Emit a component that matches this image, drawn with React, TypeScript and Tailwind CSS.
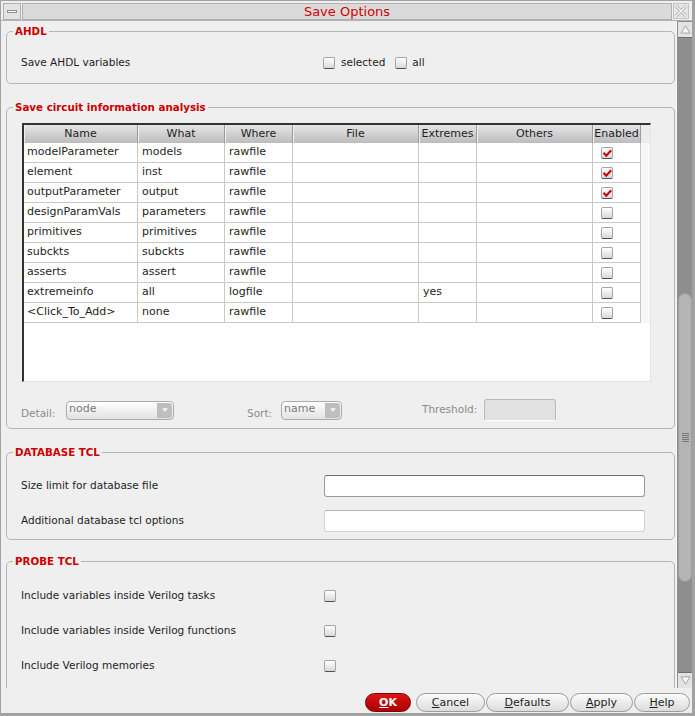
import React from 'react';

interface SaveRow {
  name: string;
  what: string;
  where: string;
  file: string;
  extremes: string;
  others: string;
  enabled: boolean;
}

const rows: SaveRow[] = [
  { name: 'modelParameter', what: 'models', where: 'rawfile', file: '', extremes: '', others: '', enabled: true },
  { name: 'element', what: 'inst', where: 'rawfile', file: '', extremes: '', others: '', enabled: true },
  { name: 'outputParameter', what: 'output', where: 'rawfile', file: '', extremes: '', others: '', enabled: true },
  { name: 'designParamVals', what: 'parameters', where: 'rawfile', file: '', extremes: '', others: '', enabled: false },
  { name: 'primitives', what: 'primitives', where: 'rawfile', file: '', extremes: '', others: '', enabled: false },
  { name: 'subckts', what: 'subckts', where: 'rawfile', file: '', extremes: '', others: '', enabled: false },
  { name: 'asserts', what: 'assert', where: 'rawfile', file: '', extremes: '', others: '', enabled: false },
  { name: 'extremeinfo', what: 'all', where: 'logfile', file: '', extremes: 'yes', others: '', enabled: false },
  { name: '<Click_To_Add>', what: 'none', where: 'rawfile', file: '', extremes: '', others: '', enabled: false },
];

const headers = ['Name', 'What', 'Where', 'File', 'Extremes', 'Others', 'Enabled'];

const CheckBox = ({ checked = false }: { checked?: boolean }) => (
  <span className="flex h-[12px] w-[12px] shrink-0 items-center justify-center rounded-[2px] border border-[#a5a5a5] border-b-[#505050] bg-gradient-to-b from-white to-[#d8d8d8]">
    {checked && (
      <svg viewBox="0 0 10 10" className="h-[10px] w-[10px]">
        <path d="M1.6 4.8 L4.2 7.6 L9.2 2.2" fill="none" stroke="#d00000" strokeWidth="2.1" />
      </svg>
    )}
  </span>
);

const Group = ({ title, className = '', children }: { title: string; className?: string; children: React.ReactNode }) => (
  <fieldset className={`ml-[5px] mr-[1px] rounded-[5px] border border-[#b6b6b6] ${className}`}>
    <legend className="ml-[6px] px-[2px] text-[10.3px] font-bold leading-[14px] text-[#cc0000]">{title}</legend>
    {children}
  </fieldset>
);

const Combo = ({ value, width }: { value: string; width: string }) => (
  <div className={`flex h-[19px] ${width} items-start rounded-[4px] border border-[#ababab] bg-gradient-to-b from-white to-[#e2e2e2]`}>
    <span className="flex-1 pl-[2px] text-[11px] leading-[14px] text-[#7a7a7a]">{value}</span>
    <span className="mr-[1px] mt-[1px] flex h-[15px] w-[15px] items-center justify-center rounded-r-[3px] bg-[#bebebe]">
      <svg viewBox="0 0 8 5" className="h-[4px] w-[6px]">
        <polygon points="0,0 8,0 4,5" fill="#f4f4f4" />
      </svg>
    </span>
  </div>
);

const ScrollArrow = ({ up }: { up?: boolean }) => (
  <div className={`flex h-[16px] w-[14px] items-center justify-center bg-[#e3e3e3] ${up ? 'border-b border-[#6f6f6f]' : 'border-t border-[#6f6f6f]'}`}>
    <svg viewBox="0 0 12 10" className="h-[9px] w-[11px]">
      <polygon points={up ? '1,9 6,1 11,9' : '1,1 6,9 11,1'} fill="#f6f6f6" stroke="#9d9d9d" strokeWidth="1" />
    </svg>
  </div>
);

const Button = ({ children, width, ok = false, className = '' }: { children: React.ReactNode; width: string; ok?: boolean; className?: string }) => (
  <button
    className={`flex h-[19px] ${width} items-center justify-center rounded-full border text-[11px] leading-[13px] ${
      ok
        ? 'border-[#7a0000] bg-gradient-to-b from-[#e01515] to-[#a80000] font-bold text-white'
        : 'border-[#9b9b9b] bg-gradient-to-b from-[#fcfcfc] to-[#dcdcdc] text-[#1e1e1e]'
    } ${className}`}
  >
    {children}
  </button>
);

export default function App() {
  return (
    <div className="flex h-[716px] w-[695px] flex-col border-b-[3px] border-l border-r-[3px] border-t border-[#a2a2a2] bg-[#efefef] font-['DejaVu_Sans',sans-serif] text-[#1e1e1e]">
      {/* Title bar */}
      <div className="flex h-[20px] shrink-0 items-start border-b border-[#b2b2b2] pt-[2px]">
        <div className="ml-[2px] flex h-[17px] w-[18px] items-center justify-center border border-[#b0b0b0] bg-[#e3e3e3]">
          <span className="h-[3px] w-[10px] border border-[#8f8f8f] bg-white" />
        </div>
        <div className="ml-[1px] flex h-[17px] flex-1 items-center justify-center border border-[#b0b0b0] bg-[#dadada]">
          <span className="text-[13px] leading-[15px] text-[#d40000]">Save Options</span>
        </div>
        <div className="ml-[1px] mr-[3px] flex h-[16px] w-[16px] items-center justify-center border border-[#c4c4c4] bg-[#e6e6e6]">
          <svg viewBox="0 0 14 14" className="h-[14px] w-[14px]">
            <path d="M2 2 L12 12 M12 2 L2 12" stroke="#a8a8a8" strokeWidth="3" />
            <path d="M2 2 L12 12 M12 2 L2 12" stroke="#fafafa" strokeWidth="1.4" />
          </svg>
        </div>
      </div>

      {/* Body */}
      <div className="flex min-h-0 flex-1">
        <div className="min-w-0 flex-1 overflow-hidden">
          {/* AHDL */}
          <Group title="AHDL" className="mt-[3px]">
            <div className="mb-[10px] mt-[15px] flex h-[20px] items-center pl-[14px] text-[10.5px]">
              <span className="w-[302px]">Save AHDL variables</span>
              <CheckBox />
              <span className="ml-[6px]">selected</span>
              <span className="ml-[10px]"><CheckBox /></span>
              <span className="ml-[5px]">all</span>
            </div>
          </Group>

          {/* Save circuit information analysis */}
          <Group title="Save circuit information analysis" className="mt-[16px]">
            <div className="ml-[15px] mt-[9px] flex h-[259px] w-[629px] flex-col border-b border-l-2 border-r border-t-2 border-b-[#e4e4e4] border-l-[#333] border-r-[#e4e4e4] border-t-[#333] bg-white">
              <div className="grid h-[18px] shrink-0 grid-cols-[114px_87px_68px_126px_58px_116px_48px_9px] bg-gradient-to-b from-[#e6e6e6] to-[#bcbcbc] text-[11px] leading-[18px]">
                {headers.map((h) => (
                  <div key={h} className="border-r border-[#9c9c9c] text-center shadow-[inset_1px_0_0_#eeeeee]">
                    {h}
                  </div>
                ))}
                <div className="bg-[#ececec]" />
              </div>
              {rows.map((r) => (
                <div key={r.name} className="grid h-[20px] grid-cols-[114px_87px_68px_126px_58px_116px_48px_9px] text-[11px] leading-[18px]">
                  <div className="border-b border-r border-[#c9c9c9] pl-[3px]">{r.name}</div>
                  <div className="border-b border-r border-[#c9c9c9] pl-[4px]">{r.what}</div>
                  <div className="border-b border-r border-[#c9c9c9] pl-[4px]">{r.where}</div>
                  <div className="border-b border-r border-[#c9c9c9] pl-[4px]">{r.file}</div>
                  <div className="border-b border-r border-[#c9c9c9] pl-[4px]">{r.extremes}</div>
                  <div className="border-b border-r border-[#c9c9c9] pl-[4px]">{r.others}</div>
                  <div className="flex items-center border-b border-r border-[#c9c9c9] pl-[8px]">
                    <CheckBox checked={r.enabled} />
                  </div>
                  <div className="bg-[#f7f7f7]" />
                </div>
              ))}
            </div>
            <div className="mb-[7px] ml-[14px] mt-[17px] flex h-[22px] items-center text-[10.5px] text-[#8c8c8c]">
              <span className="mt-[8px] w-[45px]">Detail:</span>
              <Combo value="node" width="w-[108px]" />
              <span className="ml-[73px] mt-[8px] w-[34px]">Sort:</span>
              <Combo value="name" width="w-[61px]" />
              <span className="ml-[80px] w-[62px]">Threshold:</span>
              <div className="h-[22px] w-[72px] rounded-[3px] border border-[#b9b9b9] border-b-white bg-[#e1e1e1]" />
            </div>
          </Group>

          {/* DATABASE TCL */}
          <Group title="DATABASE TCL" className="mt-[16px]">
            <div className="mb-[7px] mt-[16px] flex flex-col gap-[13px] pl-[14px] text-[10.5px]">
              <div className="flex h-[22px] items-center">
                <span className="w-[303px]">Size limit for database file</span>
                <div className="h-[22px] w-[321px] rounded-[3px] border border-[#9a9a9a] border-t-[#6e6e6e] bg-white" />
              </div>
              <div className="flex h-[22px] items-center">
                <span className="w-[303px]">Additional database tcl options</span>
                <div className="h-[22px] w-[321px] rounded-[3px] border border-[#d2d2d2] border-t-[#b4b4b4] bg-white" />
              </div>
            </div>
          </Group>

          {/* PROBE TCL */}
          <Group title="PROBE TCL" className="mt-[14px]">
            <div className="mb-[20px] mt-[18px] flex flex-col gap-[15px] pl-[14px] text-[10.5px]">
              {['Include variables inside Verilog tasks', 'Include variables inside Verilog functions', 'Include Verilog memories'].map((t) => (
                <div key={t} className="flex h-[20px] items-center">
                  <span className="w-[303px]">{t}</span>
                  <CheckBox />
                </div>
              ))}
            </div>
          </Group>
        </div>

        {/* Scrollbar */}
        <div className="flex w-[16px] shrink-0 flex-col border-l border-[#f6f6f6] bg-[#8e8e8e] pl-[1px] pt-[1px]">
          <ScrollArrow up />
          <div className="flex-1">
            <div className="mt-[255px] flex h-[289px] w-[14px] flex-col items-center justify-center gap-[1px] rounded-[7px] border border-[#9c9c9c] bg-[#b4b4b4]">
              {[0, 1, 2, 3, 4].map((i) => (
                <span key={i} className="h-[1px] w-[7px] bg-[#777]" />
              ))}
            </div>
          </div>
          <ScrollArrow />
        </div>
      </div>

      {/* Buttons */}
      <div className="flex h-[25px] shrink-0 items-start justify-end pr-[2px] pt-[5px]">
        <Button width="w-[46px]" ok>
          <span className="underline">O</span>K
        </Button>
        <Button width="w-[69px]" className="ml-[5px]">
          <span className="underline">C</span>ancel
        </Button>
        <Button width="w-[83px]" className="ml-[1px]">
          <span className="underline">D</span>efaults
        </Button>
        <Button width="w-[63px]" className="ml-[1px]">
          <span className="underline">A</span>pply
        </Button>
        <Button width="w-[56px]" className="ml-[1px]">
          <span className="underline">H</span>elp
        </Button>
      </div>
    </div>
  );
}
